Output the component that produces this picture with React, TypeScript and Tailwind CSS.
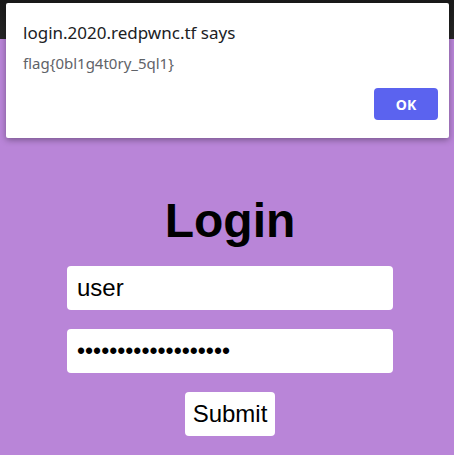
export default function App() {
  return (
    <div className="relative h-[455px] w-[454px] overflow-hidden bg-[#b985d8]" style={{ fontFamily: '"Liberation Sans", Arial, sans-serif' }}>
      <div className="h-[39px] bg-gradient-to-b from-[#1b1b1b] to-[#262626]" />

      <div className="flex flex-col items-center pl-[6px] pt-[154px]">
        <h1 className="text-[48px] font-bold leading-[56px] text-black">Login</h1>
        <input
          type="text"
          defaultValue="user"
          className="mt-[17px] h-[44px] w-[326px] rounded-[4px] bg-white px-[10px] text-[24px] text-black outline-none"
        />
        <input
          type="password"
          defaultValue="aaaaaaaaaaaaaaaaaaa"
          className="mt-[19px] h-[44px] w-[326px] rounded-[4px] bg-white px-[10px] text-[23px] text-black outline-none"
        />
        <button className="mt-[19px] h-[44px] w-[90px] rounded-[4px] bg-white text-[24px] text-black">Submit</button>
      </div>

      {/* alert dialog */}
      <div
        className="absolute left-[6px] top-[3px] h-[135px] w-[443px] rounded-[2px] bg-white shadow-[0_2px_6px_rgba(0,0,0,0.35)]"
        style={{ fontFamily: '"Noto Sans", "Open Sans", sans-serif' }}
      >
        <div className="pl-[17px] pt-[19px] text-[17px] leading-[21px] text-[#202124]">login.2020.redpwnc.tf says</div>
        <div className="pl-[17px] pt-[11px] text-[15px] leading-[19px] text-[#5f6368]">flag{"{"}0bl1g4t0ry_5ql1{"}"}</div>
        <div className="flex justify-end pr-[11px] pt-[15px]">
          <button className="h-[32px] w-[64px] rounded-[4px] bg-[#5b63ef] text-[14px] font-bold text-white">OK</button>
        </div>
      </div>
    </div>
  );
}
